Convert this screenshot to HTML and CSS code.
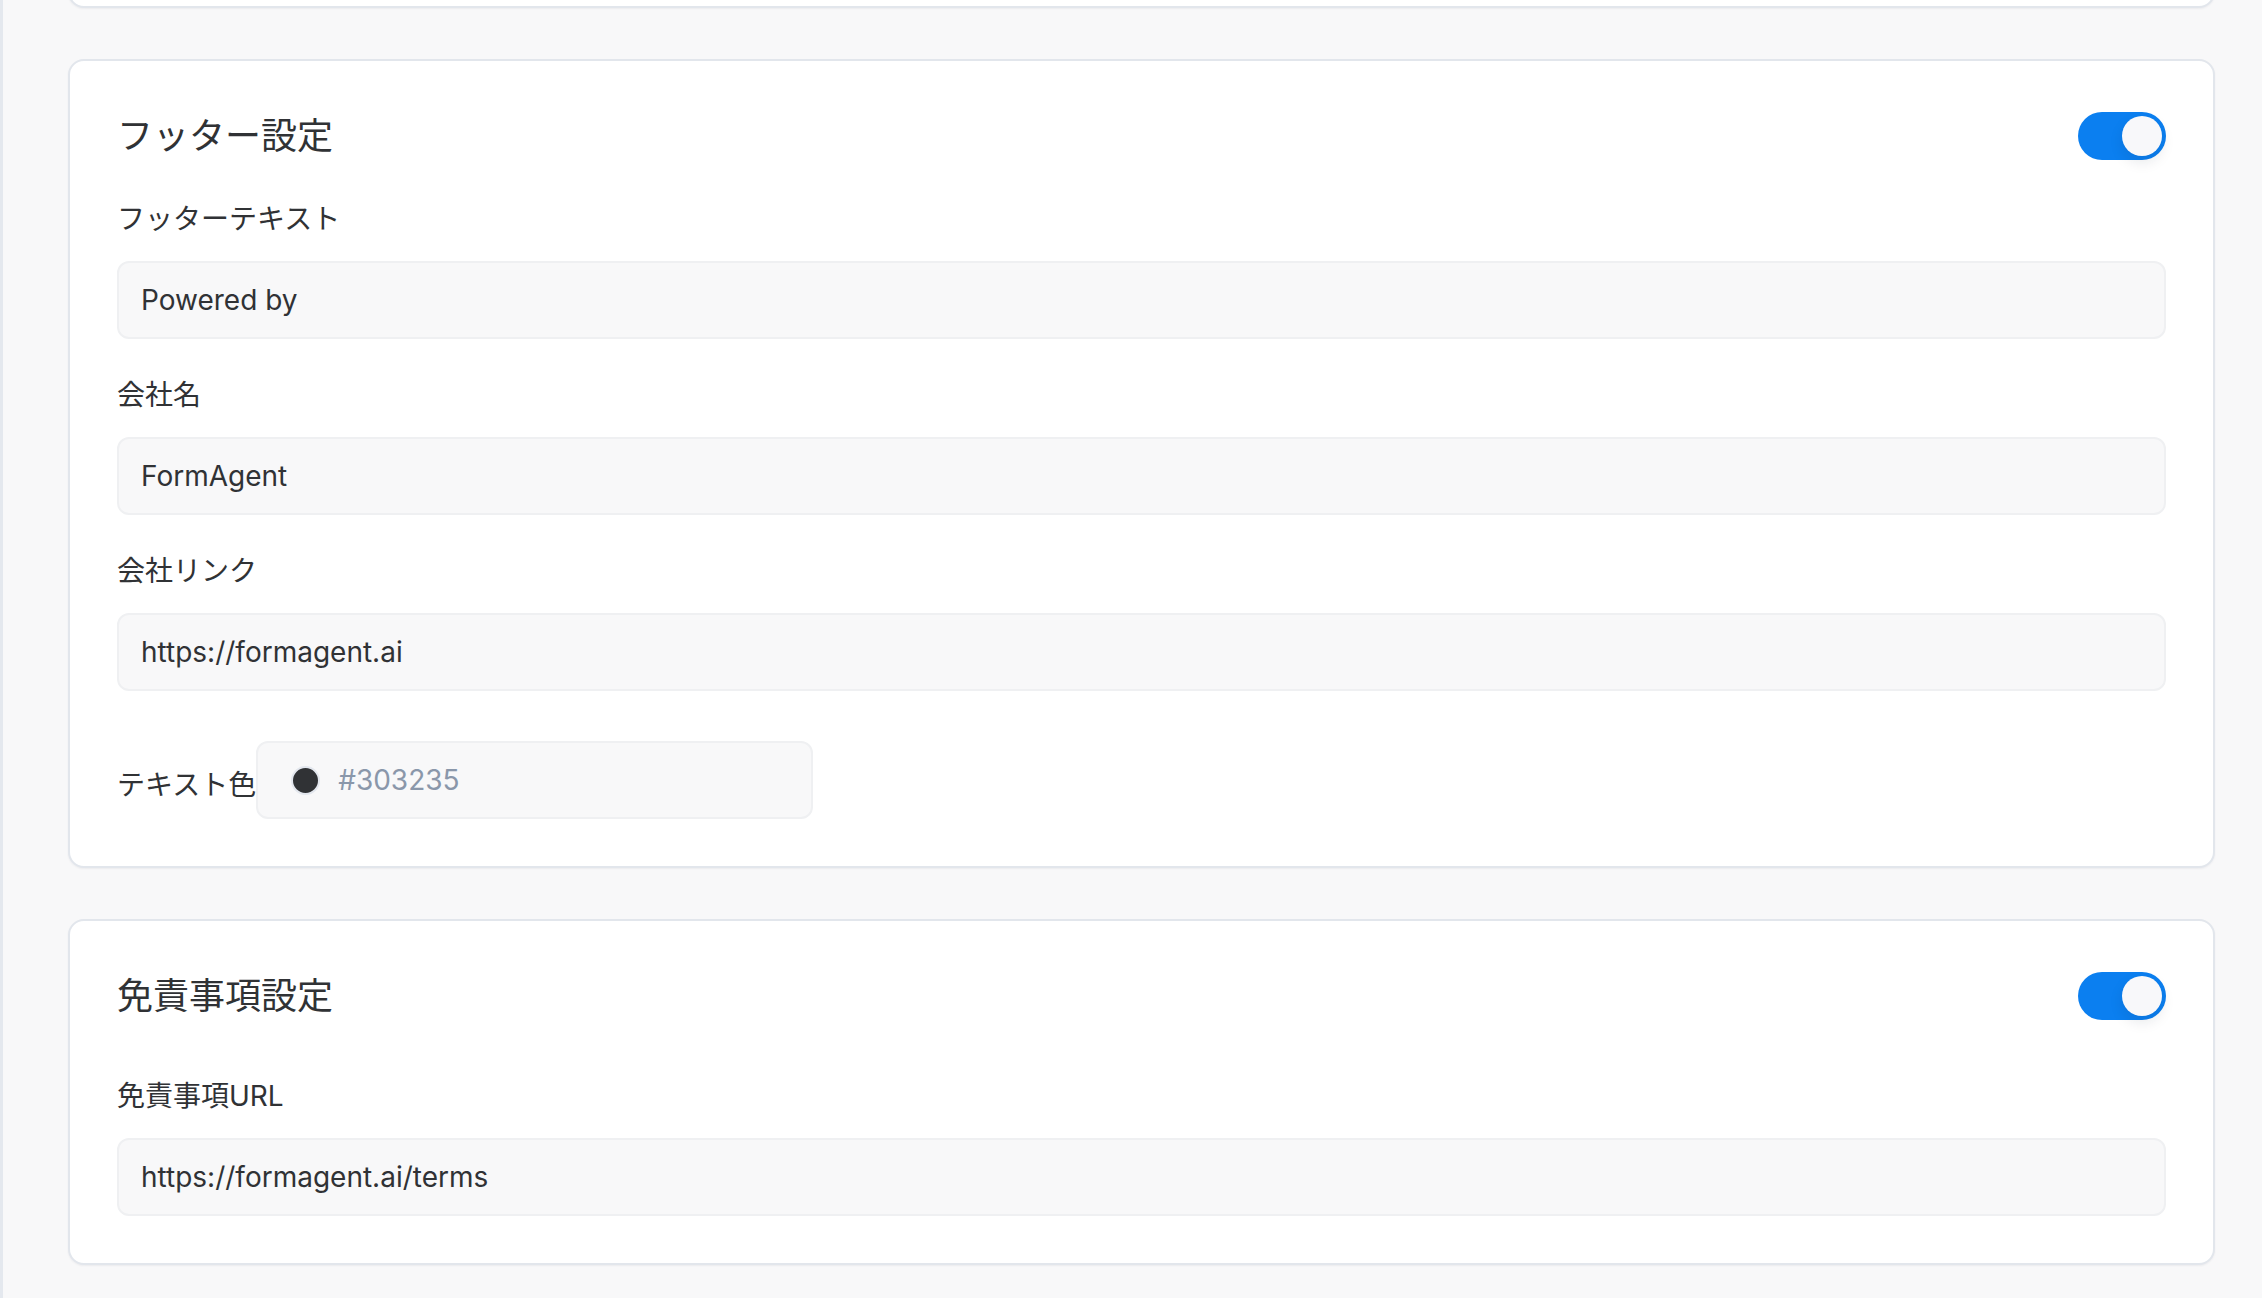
FILE: index.html
```html
<!DOCTYPE html>
<html lang="ja">
<head>
    <meta charset="UTF-8">
    <meta name="viewport" content="width=device-width, initial-scale=1.0">
    <title>フッター設定</title>
    <link rel="stylesheet" href="styles.css">
</head>
<body>
    <main class="settings">
        <!-- previous card, scrolled out of view -->
        <section class="card card-prev"></section>

        <section class="card">
            <div class="card-header">
                <h2>フッター設定</h2>
                <label class="toggle">
                    <input type="checkbox" checked>
                    <span class="track"><span class="knob"></span></span>
                </label>
            </div>
            <div class="field">
                <label for="footerText">フッターテキスト</label>
                <input type="text" id="footerText" value="Powered by">
            </div>
            <div class="field">
                <label for="company">会社名</label>
                <input type="text" id="company" value="FormAgent">
            </div>
            <div class="field">
                <label for="companyLink">会社リンク</label>
                <input type="text" id="companyLink" value="https://formagent.ai">
            </div>
            <div class="color-row">
                <span class="color-label">テキスト色</span>
                <div class="color-input">
                    <span class="swatch"></span>
                    <span class="hex">#303235</span>
                </div>
            </div>
        </section>

        <section class="card">
            <div class="card-header">
                <h2>免責事項設定</h2>
                <label class="toggle">
                    <input type="checkbox" checked>
                    <span class="track"><span class="knob"></span></span>
                </label>
            </div>
            <div class="field field-first">
                <label for="termsUrl">免責事項URL</label>
                <input type="text" id="termsUrl" value="https://formagent.ai/terms">
            </div>
        </section>
    </main>
</body>
</html>
```

FILE: styles.css
```css
body {
    margin: 0;
    background-color: #f8f8f9;
    font-family: "Inter", "Noto Sans CJK JP", sans-serif;
    color: #303235;
}
.settings {
    min-height: 1298px;
    box-sizing: border-box;
    border-left: 3px solid #e4e8ee;
    padding: 0 47px 0 65px;
    display: flex;
    flex-direction: column;
    gap: 51px;
}
.card {
    background-color: #fff;
    border: 2px solid #e2e6ec;
    border-radius: 16px;
    box-shadow: 0 1px 2px rgba(30, 40, 60, 0.06);
    padding: 51px 47px 47px 47px;
}
.card-prev {
    height: 0;
    padding: 0 0 40px;
    margin-top: -36px;
}
.card-header {
    display: flex;
    justify-content: space-between;
    align-items: center;
    height: 48px;
    margin-bottom: 39px;
}
.card-header h2 {
    margin: 0;
    font-size: 36px;
    font-weight: 400;
    line-height: 48px;
}
.toggle {
    position: relative;
    display: block;
    width: 88px;
    height: 48px;
    cursor: pointer;
}
.toggle input {
    display: none;
}
.track {
    display: block;
    width: 100%;
    height: 100%;
    border-radius: 24px;
    background-color: #0b7ff0;
}
.knob {
    position: absolute;
    top: 4px;
    right: 4px;
    width: 40px;
    height: 40px;
    border-radius: 50%;
    background-color: #f8f8fa;
    box-shadow: 0 6px 14px rgba(20, 30, 50, 0.10);
}
.field {
    display: flex;
    flex-direction: column;
    margin-bottom: 36px;
}
.field-first {
    margin-top: 56px;
    margin-bottom: 0;
}
.field label,
.color-label {
    font-size: 28px;
    line-height: 40px;
}
.field label {
    margin-bottom: 22px;
}
.field input[type="text"] {
    width: 100%;
    box-sizing: border-box;
    height: 78px;
    padding: 17px 22px;
    border: 2px solid #eff0f2;
    border-radius: 12px;
    background-color: #f8f8f9;
    font-family: inherit;
    font-size: 28px;
    line-height: 40px;
    color: #303235;
    outline: none;
}
.color-row {
    display: flex;
    align-items: center;
    margin-top: 50px;
}
.color-label {
    margin-top: 10px;
    white-space: nowrap;
}
.color-input {
    display: flex;
    align-items: center;
    gap: 18px;
    width: 557px;
    height: 78px;
    box-sizing: border-box;
    padding: 0 33px;
    border: 2px solid #eff0f2;
    border-radius: 12px;
    background-color: #f8f8f9;
}
.swatch {
    width: 25px;
    height: 25px;
    border-radius: 50%;
    background-color: #303235;
    border: 2px solid #e3e7ee;
}
.hex {
    font-size: 28px;
    color: #8a97aa;
}
```
